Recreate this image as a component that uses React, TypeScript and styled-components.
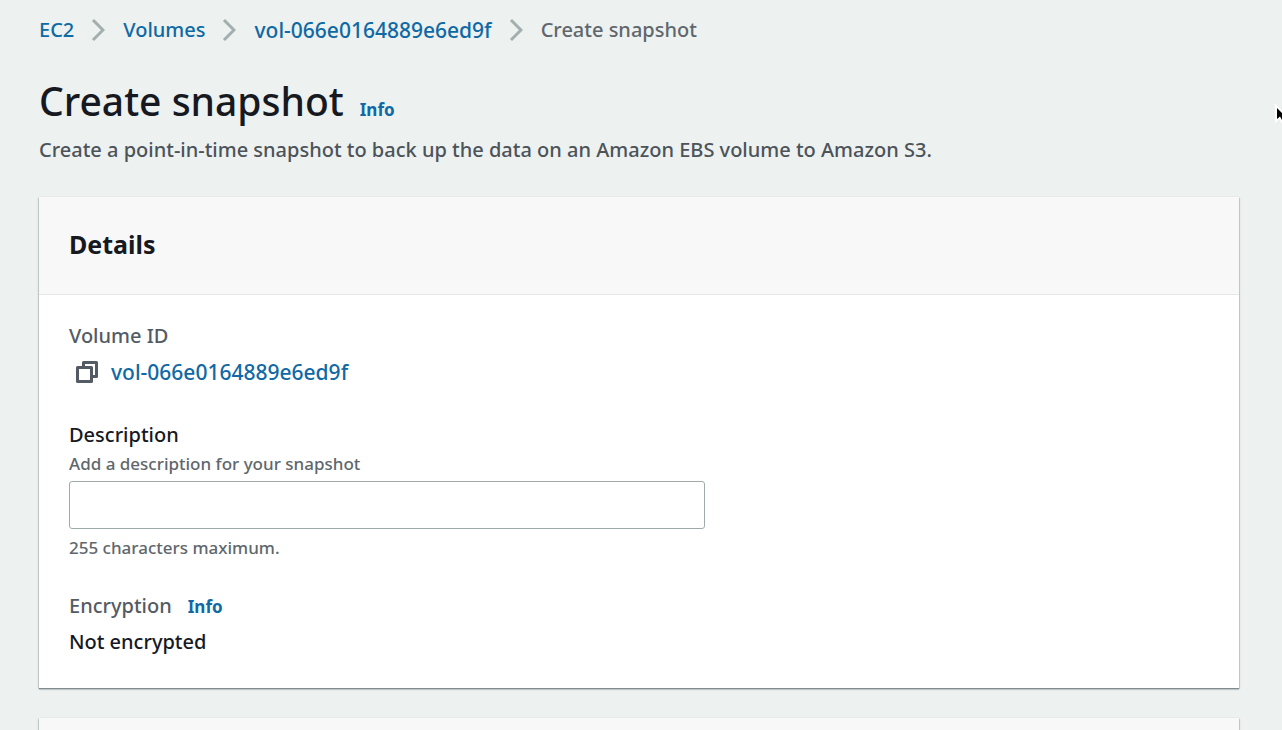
import React from 'react';
import styled, { createGlobalStyle } from 'styled-components';

const GlobalStyle = createGlobalStyle`
  * {
    box-sizing: border-box;
  }

  html {
    height: 100%;
    overflow: hidden;
  }

  body {
    margin: 0;
    height: 100%;
    overflow: hidden;
    background: #edf1f0;
    color: #16191f;
    font-family: 'Noto Sans', 'Open Sans', sans-serif;
    font-size: 20px;
    font-weight: 500;
    line-height: 30px;
  }
`;

const Page = styled.main`
  position: relative;
  display: flex;
  flex-direction: column;
  padding: 15px 43px 0 39px;
`;

const Link = styled.a`
  color: #0f69a5;
  text-decoration: none;
`;

const ResourceLink = styled(Link)`
  font-size: 21px;
`;

const InfoLink = styled(Link)`
  font-size: 17px;
  font-weight: 700;
  line-height: 20px;
`;

const Crumbs = styled.ol`
  display: flex;
  align-items: center;
  margin: 0;
  padding: 0;
  list-style: none;
`;

const Crumb = styled.li<{ $current?: boolean }>`
  display: flex;
  align-items: center;
  color: ${(p) => (p.$current ? '#60676c' : 'inherit')};
`;

const Separator = styled.svg`
  width: 14px;
  height: 24px;
  margin: 0 18px 0 17px;
`;

const PageHeader = styled.header`
  margin: 32px 0;
`;

const TitleRow = styled.div`
  display: flex;
  align-items: baseline;
  gap: 16px;
`;

const Title = styled.h1`
  margin: 0;
  font-size: 39px;
  font-weight: 500;
  line-height: 48px;
`;

const Lead = styled.p`
  margin: 10px 0 0;
  color: #4c5359;
`;

const Panel = styled.section`
  background: #fff;
  box-shadow:
    0 1px 1px #7f8b8c,
    0 1px 2px rgba(0, 20, 20, 0.4);

  & + & {
    margin-top: 30px;
  }
`;

const PanelHeader = styled.div`
  min-height: 98px;
  padding: 30px;
  border-bottom: 1px solid #e6e8e8;
  background: #f8f8f8;
`;

const PanelTitle = styled.h2`
  margin: 0;
  font-size: 25px;
  font-weight: 700;
  line-height: 34px;
`;

const PanelBody = styled.div`
  display: flex;
  flex-direction: column;
  gap: 32px;
  padding: 26px 30px 30px;
`;

const Field = styled.div`
  display: flex;
  flex-direction: column;
`;

const FieldName = styled.div`
  display: flex;
  align-items: baseline;
  gap: 16px;
  margin-bottom: 5px;
  color: #545b64;
`;

const FieldValue = styled.div`
  display: flex;
  align-items: center;
  line-height: 32px;
`;

const CopyButton = styled.button`
  display: flex;
  margin: 0;
  padding: 0 12px 0 6px;
  border: 0;
  background: none;
  color: #545b64;
`;

const Label = styled.label`
  margin-bottom: 3px;
`;

const Hint = styled.span`
  color: #60676c;
  font-size: 17px;
  line-height: 22px;
`;

const TextInput = styled.input`
  width: 636px;
  max-width: 100%;
  height: 48px;
  margin: 6px 0 8px;
  padding: 6px 14px;
  border: 1px solid #9fabab;
  border-radius: 3px;
  background: #fff;
  color: inherit;
  font: inherit;
`;

const Pointer = styled.svg`
  position: absolute;
  top: 104px;
  right: 0;
  width: 8px;
  height: 20px;
`;

function CopyIcon() {
  return (
    <svg width="24" height="24" viewBox="0 0 24 24" fill="none" stroke="currentColor" strokeWidth="3" strokeLinejoin="round" aria-hidden="true">
      <path d="M2.500 7.500h14v14h-14z" />
      <path d="M8.500 7V2.500h13v14H17" />
    </svg>
  );
}

function Chevron() {
  return (
    <Separator viewBox="0 0 14 24" fill="none" stroke="#a3aeae" strokeWidth="3" aria-hidden="true">
      <path d="M2 2l10 10L2 22" />
    </Separator>
  );
}

export default function App() {
  return (
    <>
      <GlobalStyle />
      <Page>
        <nav aria-label="Breadcrumbs">
          <Crumbs>
            <Crumb>
              <Link href="#">EC2</Link>
              <Chevron />
            </Crumb>
            <Crumb>
              <Link href="#">Volumes</Link>
              <Chevron />
            </Crumb>
            <Crumb>
              <ResourceLink href="#">vol-066e0164889e6ed9f</ResourceLink>
              <Chevron />
            </Crumb>
            <Crumb $current aria-current="page">
              Create snapshot
            </Crumb>
          </Crumbs>
        </nav>

        <PageHeader>
          <TitleRow>
            <Title>Create snapshot</Title>
            <InfoLink href="#">Info</InfoLink>
          </TitleRow>
          <Lead>Create a point-in-time snapshot to back up the data on an Amazon EBS volume to Amazon S3.</Lead>
        </PageHeader>

        <Panel>
          <PanelHeader>
            <PanelTitle>Details</PanelTitle>
          </PanelHeader>
          <PanelBody>
            <Field>
              <FieldName>Volume ID</FieldName>
              <FieldValue>
                <CopyButton type="button" aria-label="Copy volume ID">
                  <CopyIcon />
                </CopyButton>
                <ResourceLink href="#">vol-066e0164889e6ed9f</ResourceLink>
              </FieldValue>
            </Field>
            <Field>
              <Label htmlFor="description">Description</Label>
              <Hint id="description-hint">Add a description for your snapshot</Hint>
              <TextInput id="description" type="text" maxLength={255} aria-describedby="description-hint description-limit" />
              <Hint id="description-limit">255 characters maximum.</Hint>
            </Field>
            <Field>
              <FieldName>
                Encryption <InfoLink href="#">Info</InfoLink>
              </FieldName>
              <FieldValue>Not encrypted</FieldValue>
            </Field>
          </PanelBody>
        </Panel>

        <Panel>
          <PanelHeader />
        </Panel>

        <Pointer viewBox="0 0 8 20" aria-hidden="true">
          <path d="M2 2v15l4-3.500 2 4.500h4V12z" fill="#fff" stroke="#fff" strokeWidth="2" />
          <path d="M3 4v11l3-2.500 2 3.500V9z" fill="#000" />
        </Pointer>
      </Page>
    </>
  );
}
